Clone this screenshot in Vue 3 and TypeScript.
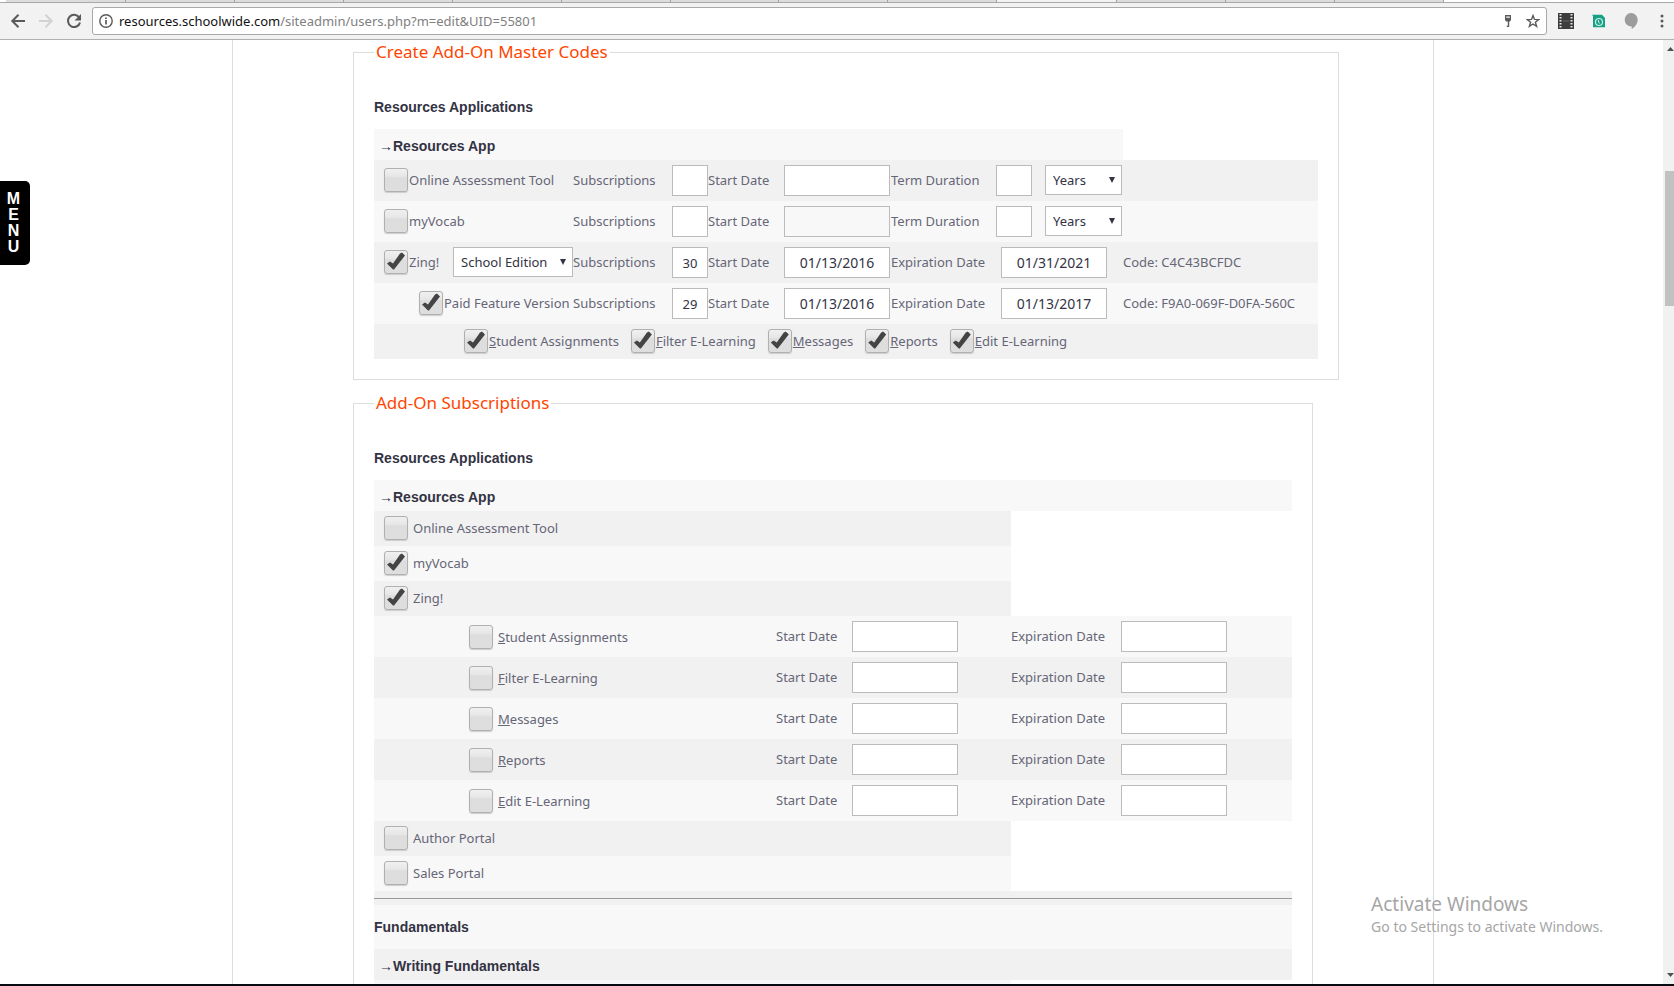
<script setup lang="ts">
import { reactive } from 'vue'

interface Feature {
  id: string
  label: string
  masterOn: boolean
  subOn: boolean
  start: string
  end: string
}

interface MasterRow {
  id: string
  label: string
  on: boolean
  nested: boolean
  edition: boolean
  count: string
  start: string
  locked: boolean
  end: string
  code: string
}

interface AppRow {
  id: string
  label: string
  on: boolean
}

const tabs: string[] = ['t1', 't2', 't3', 't4', 't5', 't6', 't7', 't8', 't9', 'active', 't11', 't12', 't13']

const masterRows = reactive<MasterRow[]>([
  { id: 'oat', label: 'Online Assessment Tool', on: false, nested: false, edition: false, count: '', start: '', locked: false, end: '', code: '' },
  { id: 'vocab', label: 'myVocab', on: false, nested: false, edition: false, count: '', start: '', locked: true, end: '', code: '' },
  { id: 'zing', label: 'Zing!', on: true, nested: false, edition: true, count: '30', start: '01/13/2016', locked: false, end: '01/31/2021', code: 'C4C43BCFDC' },
  { id: 'paid', label: 'Paid Feature Version', on: true, nested: true, edition: false, count: '29', start: '01/13/2016', locked: false, end: '01/13/2017', code: 'F9A0-069F-D0FA-560C' },
])

const features = reactive<Feature[]>(
  ['Student Assignments', 'Filter E-Learning', 'Messages', 'Reports', 'Edit E-Learning'].map((label, i) => ({
    id: 'f' + i,
    label,
    masterOn: true,
    subOn: false,
    start: '',
    end: '',
  })),
)

const appsBefore = reactive<AppRow[]>([
  { id: 'a-oat', label: 'Online Assessment Tool', on: false },
  { id: 'a-vocab', label: 'myVocab', on: true },
  { id: 'a-zing', label: 'Zing!', on: true },
])

const appsAfter = reactive<AppRow[]>([
  { id: 'a-author', label: 'Author Portal', on: false },
  { id: 'a-sales', label: 'Sales Portal', on: false },
])
</script>

<template>
  <div class="window">
    <header class="chrome">
      <div class="tabstrip">
        <span v-for="t in tabs" :key="t" class="tab" :class="{ active: t === 'active' }"></span>
      </div>
      <div class="toolbar">
        <button class="nav" type="button" aria-label="Back">
          <svg width="16" height="16" viewBox="0 0 16 16"><path d="M15 8H2.5M8.5 1.8 2.3 8l6.2 6.2" fill="none" stroke="#5a5a5a" stroke-width="2" /></svg>
        </button>
        <button class="nav" type="button" aria-label="Forward">
          <svg width="16" height="16" viewBox="0 0 16 16"><path d="M1 8h12.5M7.5 1.8 13.7 8l-6.2 6.2" fill="none" stroke="#d2d2d2" stroke-width="2" /></svg>
        </button>
        <button class="nav" type="button" aria-label="Reload">
          <svg width="16" height="16" viewBox="0 0 16 16"><path d="M13.2 4.6A6.1 6.1 0 1 0 14 9.4" fill="none" stroke="#5a5a5a" stroke-width="2" /><path d="M15 1v6.4H8.6z" fill="#5a5a5a" /></svg>
        </button>
        <div class="omnibox">
          <svg width="14" height="14" viewBox="0 0 14 14"><circle cx="7" cy="7" r="6.2" fill="none" stroke="#5a5a5a" stroke-width="1.4" /><path d="M7 6v4.4M7 3.4v1.7" stroke="#5a5a5a" stroke-width="1.7" /></svg>
          <div class="url"><span class="host">resources.schoolwide.com</span>/siteadmin/users.php?m=edit&amp;UID=55801</div>
          <button class="mini" type="button" aria-label="Saved password">
            <svg width="14" height="14" viewBox="0 0 14 14"><path fill-rule="evenodd" d="M4 1h6v5L9 7.500H8.200v5.500H5.800v-1.200h1V7.500H5L4 6zM5.200 2.400v1.300h3.600V2.400z" fill="#5a5a5a" /></svg>
          </button>
          <button class="mini" type="button" aria-label="Bookmark this page">
            <svg width="14" height="14" viewBox="0 0 14 14"><path d="M7 1.500 8.500 5.400l4.200.2-3.300 2.600 1.200 4.100L7 10l-3.600 2.300 1.200-4.100L1.300 5.600l4.200-.2z" fill="none" stroke="#5a5a5a" stroke-width="1.400" /></svg>
          </button>
        </div>
        <div class="extensions">
          <button class="ext" type="button" aria-label="Video extension">
            <svg width="16" height="16" viewBox="0 0 16 16"><rect width="16" height="16" fill="#3c3c3c" /><path d="M2.500 1v14M13.500 1v14" stroke="#e8e8e8" stroke-width="2" stroke-dasharray="1.500 1.500" /><path d="M5 8h6" stroke="#666" /></svg>
          </button>
          <button class="ext" type="button" aria-label="Clock extension">
            <svg width="14" height="14" viewBox="0 0 14 14"><path d="M1 2 0 .8h10L13 4v9.200H1z" fill="#16a085" /><circle cx="7" cy="8" r="3.500" fill="none" stroke="#cdeee6" stroke-width="1.200" /><path d="M6.500 6v2.300l1.500 1" fill="none" stroke="#cdeee6" /></svg>
          </button>
          <button class="ext" type="button" aria-label="Hangouts">
            <svg width="14" height="16" viewBox="0 0 14 16"><path d="M7 0a6.700 6.700 0 0 1 6.700 6.800c0 3.800-2.700 7.200-6 9.200v-2.600A6.700 6.700 0 1 1 7 0z" fill="#9c9c9c" /></svg>
          </button>
          <button class="ext more" type="button" aria-label="Browser menu">
            <svg width="4" height="14" viewBox="0 0 4 14"><circle cx="2" cy="2" r="1.500" fill="#5a5a5a" /><circle cx="2" cy="7" r="1.500" fill="#5a5a5a" /><circle cx="2" cy="12" r="1.500" fill="#5a5a5a" /></svg>
          </button>
        </div>
      </div>
    </header>

    <div class="viewport">
      <main class="page">
        <div class="content">
          <fieldset class="master">
            <legend>Create Add-On Master Codes</legend>
            <h3>Resources Applications</h3>
            <table>
              <colgroup>
                <col class="m-app" /><col class="m-count" /><col class="m-start" /><col class="m-term" /><col class="m-code" />
              </colgroup>
              <tbody>
                <tr class="group">
                  <th colspan="4" scope="colgroup"><span class="arrow">→</span>Resources App</th>
                </tr>
                <tr v-for="(r, i) in masterRows" :key="r.id" class="tall" :class="i % 2 ? 'light' : 'dark'">
                  <td>
                    <div class="line app" :class="{ nested: r.nested }">
                      <label class="tick tight"><input v-model="r.on" type="checkbox" />{{ r.label }}</label>
                      <span v-if="r.edition" class="pick edition">
                        <select aria-label="Zing! edition"><option>School Edition</option></select>
                        <svg width="6" height="6" viewBox="0 0 6 6"><path d="M0 0h6L3 6z" fill="#334" /></svg>
                      </span>
                    </div>
                  </td>
                  <td>
                    <div class="line">
                      <label class="w-count" :for="r.id + '-count'">Subscriptions</label>
                      <input :id="r.id + '-count'" v-model="r.count" class="num" type="text" />
                    </div>
                  </td>
                  <td>
                    <div class="line">
                      <label class="w-start" :for="r.id + '-start'">Start Date</label>
                      <input :id="r.id + '-start'" v-model="r.start" class="date" type="text" :readonly="r.locked" />
                    </div>
                  </td>
                  <td>
                    <div v-if="r.code" class="line">
                      <label class="w-end" :for="r.id + '-end'">Expiration Date</label>
                      <input :id="r.id + '-end'" v-model="r.end" class="date" type="text" />
                    </div>
                    <div v-else class="line">
                      <label class="w-term" :for="r.id + '-term'">Term Duration</label>
                      <input :id="r.id + '-term'" class="num" type="text" />
                      <span class="pick unit">
                        <select :aria-label="r.label + ' term unit'"><option>Years</option></select>
                        <svg width="6" height="6" viewBox="0 0 6 6"><path d="M0 0h6L3 6z" fill="#334" /></svg>
                      </span>
                    </div>
                  </td>
                  <td class="code"><template v-if="r.code">Code: {{ r.code }}</template></td>
                </tr>
                <tr class="short dark">
                  <td colspan="5">
                    <div class="line features">
                      <label v-for="f in features" :key="f.id" class="tick tight">
                        <input v-model="f.masterOn" type="checkbox" /><span><u>{{ f.label.charAt(0) }}</u>{{ f.label.slice(1) }}</span>
                      </label>
                    </div>
                  </td>
                </tr>
              </tbody>
            </table>
          </fieldset>

          <fieldset class="subs">
            <legend>Add-On Subscriptions</legend>
            <h3>Resources Applications</h3>
            <table>
              <colgroup>
                <col class="s-app" /><col class="s-start" /><col class="s-end" />
              </colgroup>
              <tbody>
                <tr class="group">
                  <th colspan="3" scope="colgroup"><span class="arrow">→</span>Resources App</th>
                </tr>
                <tr v-for="(a, i) in appsBefore" :key="a.id" class="short" :class="i % 2 ? 'light' : 'dark'">
                  <td colspan="2">
                    <div class="line app"><label class="tick"><input v-model="a.on" type="checkbox" />{{ a.label }}</label></div>
                  </td>
                </tr>
                <tr v-for="(f, i) in features" :key="f.id" class="tall" :class="i % 2 ? 'dark' : 'light'">
                  <td>
                    <div class="line sub">
                      <label class="tick">
                        <input v-model="f.subOn" type="checkbox" /><span><u>{{ f.label.charAt(0) }}</u>{{ f.label.slice(1) }}</span>
                      </label>
                    </div>
                  </td>
                  <td>
                    <div class="line">
                      <label class="w-start" :for="f.id + '-s'">Start Date</label>
                      <input :id="f.id + '-s'" v-model="f.start" class="date" type="text" />
                    </div>
                  </td>
                  <td>
                    <div class="line">
                      <label class="w-end" :for="f.id + '-e'">Expiration Date</label>
                      <input :id="f.id + '-e'" v-model="f.end" class="date" type="text" />
                    </div>
                  </td>
                </tr>
                <tr v-for="(a, i) in appsAfter" :key="a.id" class="short" :class="i % 2 ? 'light' : 'dark'">
                  <td colspan="2">
                    <div class="line app"><label class="tick"><input v-model="a.on" type="checkbox" />{{ a.label }}</label></div>
                  </td>
                </tr>
                <tr class="rule dark"><td colspan="3"><hr /></td></tr>
                <tr class="section light"><td colspan="3"><h3>Fundamentals</h3></td></tr>
                <tr class="group dark">
                  <th colspan="3" scope="colgroup"><span class="arrow">→</span>Writing Fundamentals</th>
                </tr>
                <tr class="short light"><td colspan="2"></td></tr>
              </tbody>
            </table>
          </fieldset>
        </div>
      </main>
      <div class="scrollbar">
        <svg width="7" height="4" viewBox="0 0 7 4"><path d="M0 4 3.500 0 7 4z" fill="#505050" /></svg>
        <div class="thumb"></div>
        <svg width="7" height="4" viewBox="0 0 7 4"><path d="M0 0h7L3.500 4z" fill="#505050" /></svg>
      </div>
      <button class="menu" type="button" aria-label="Menu"><span v-for="c in 'MENU'" :key="c">{{ c }}</span></button>
      <div class="watermark">
        <p class="big">Activate Windows</p>
        <p>Go to Settings to activate Windows.</p>
      </div>
    </div>
    <div class="taskbar"></div>
  </div>
</template>

<style>
body {
  margin: 0;
}
</style>

<style scoped>
.window {
  display: flex;
  flex-direction: column;
  height: 100vh;
  overflow: hidden;
  background: #fff;
  color: #667;
  font: 13px/20px "Noto Sans", "Open Sans", sans-serif;
}
.window * {
  box-sizing: border-box;
}
button {
  padding: 0;
  border: 0;
  background: none;
  font: inherit;
}
svg {
  display: block;
  flex: none;
}

/* browser bar */
.chrome {
  flex: none;
  background: #f2f2f2;
  border-bottom: 1px solid #b0b0b0;
}
.tabstrip {
  display: flex;
  height: 3px;
  padding-left: 6px;
  padding-right: 230px;
  border-bottom: 1px solid #a9a9a9;
  background: #fff;
}
.tab {
  flex: 10;
  border-right: 1px solid #a0a0a0;
  background: #dcdcdc;
}
.tab:first-child,
.tab.active {
  flex-grow: 11;
}
.tab.active {
  background: #f2f2f2;
}
.toolbar {
  display: flex;
  align-items: center;
  height: 36px;
  padding-left: 4px;
}
.nav {
  display: grid;
  place-items: center;
  width: 28px;
  height: 28px;
}
.omnibox {
  display: flex;
  flex: 1;
  align-items: center;
  gap: 6px;
  height: 28px;
  margin-left: 4px;
  padding: 0 6px;
  border: 1px solid #a9a9a9;
  border-radius: 3px;
  background: #fff;
}
.url {
  flex: 1;
  color: #808080;
  font-size: 13px;
}
.host {
  color: #111;
}
.mini {
  margin-left: 5px;
}
.extensions {
  display: flex;
  align-items: center;
  gap: 18px;
  padding: 0 10px 0 11px;
}
.more {
  margin-left: 4px;
}

/* page */
.viewport {
  position: relative;
  display: flex;
  flex: 1;
  min-height: 0;
}
.page {
  flex: 1;
  min-width: 0;
  padding: 0 229px 0 232px;
  overflow: hidden;
}
.content {
  padding-left: 120px;
  border: solid #ddd;
  border-width: 0 1px;
}
fieldset {
  min-width: 0;
  margin: 0 0 11px;
  padding: 33px 20px 20px;
  border: 1px solid #ddd;
}
.master {
  width: 986px;
}
.subs {
  width: 960px;
}
legend {
  padding: 0 2px;
  color: #ff4500;
  font-size: 17px;
  line-height: 24px;
}
h3 {
  margin: 0 0 12px;
  color: #334;
  font: bold 14px/20px "Liberation Sans", Arial, sans-serif;
}
table {
  width: 100%;
  border-collapse: collapse;
  table-layout: fixed;
}
td,
th {
  padding: 0;
  text-align: left;
  white-space: nowrap;
}
.m-app { width: 199px; }
.m-count { width: 135px; }
.m-start { width: 183px; }
.m-term { width: 232px; }
.s-app { width: 402px; }
.s-start { width: 235px; }
.tall { height: 41px; }
.short { height: 35px; }
.rule { height: 14px; }
.section { height: 44px; }
.group { height: 31px; }
.light td,
.group th {
  background: #f8f8f8;
}
.dark td,
.group.dark th {
  background: #f1f1f1;
}
.group th {
  padding: 4px 5px 0;
  color: #334;
  font: bold 14px/20px "Liberation Sans", Arial, sans-serif;
}
.arrow {
  font-family: "Liberation Serif", serif;
  font-weight: normal;
}
.section h3 {
  margin: 0;
}
hr {
  margin: 0;
  border: 0;
  border-top: 1px solid #999;
}
.line {
  display: flex;
  align-items: center;
}
.app {
  justify-content: space-between;
  padding-left: 10px;
}
.app.nested {
  padding-left: 45px;
}
.sub {
  padding-left: 95px;
}
.features {
  gap: 12px;
  padding-left: 90px;
}
.line label,
td.code {
  padding-bottom: 2px;
}
.line.sub label {
  padding-bottom: 0;
}
.w-count { width: 99px; }
.w-start { width: 76px; }
.w-term { width: 105px; }
.w-end { width: 110px; }

.tick {
  display: flex;
  align-items: center;
  gap: 5px;
}
.tick.tight {
  gap: 1px;
}
.tick input {
  width: 24px;
  height: 24px;
  margin: 0;
  appearance: none;
  border: 1px solid #b0b0b0;
  border-radius: 3px;
  background: linear-gradient(#f0f0f0, #e6e6e6 35%, #dddddd 40%, #dedede);
  box-shadow: 0 1px 1px #ccc;
}
.tick input:checked::before {
  display: block;
  width: 22px;
  height: 22px;
  background: #444;
  clip-path: polygon(2px 13px, 5px 11px, 8px 13px, 15px 3px, 17px 2px, 20px 5px, 9px 19px, 8px 19px);
  content: "";
}
.num,
.date {
  height: 31px;
  padding: 0;
  border: 1px solid #bbb;
  border-radius: 0;
  background: #fff;
  color: #334;
  font: 14px/20px "Noto Sans", "Open Sans", sans-serif;
  text-align: center;
}
.num {
  width: 36px;
  font-size: 13px;
}
.date { width: 106px; }
.date:read-only {
  background: #f8f8f8;
}
.pick {
  position: relative;
  margin-bottom: 1px;
}
.pick select {
  display: block;
  width: 100%;
  height: 30px;
  padding: 0 7px;
  appearance: none;
  border: 1px solid #bbb;
  border-radius: 0;
  background: #fff;
  color: #334;
  font: inherit;
}
.pick svg {
  position: absolute;
  top: 12px;
  right: 7px;
  pointer-events: none;
}
.edition { width: 120px; }
.unit {
  width: 77px;
  margin-left: 13px;
}

/* scroll bar */
.scrollbar {
  display: flex;
  flex: none;
  flex-direction: column;
  align-items: flex-end;
  width: 11px;
  padding: 7px 0;
  background: #f1f1f1;
}
.thumb {
  width: 9px;
  height: 135px;
  margin: 120px 0 auto;
  background: #c1c1c1;
}

/* overlays */
.menu {
  position: absolute;
  top: 141px;
  left: 0;
  display: flex;
  flex-direction: column;
  align-items: center;
  width: 30px;
  padding: 10px 3px 10px 0;
  border-radius: 0 5px 5px 0;
  background: #000;
  color: #fff;
  font: bold 16px/16px "Liberation Sans", Arial, sans-serif;
}
.watermark {
  position: absolute;
  right: 71px;
  bottom: 47px;
  color: #a6a6a6;
  font-size: 14px;
}
.watermark p {
  margin: 0;
}
.watermark .big {
  font-size: 19px;
  line-height: 26px;
}
.taskbar {
  flex: none;
  height: 2px;
  background: #0a0c14;
}
</style>
